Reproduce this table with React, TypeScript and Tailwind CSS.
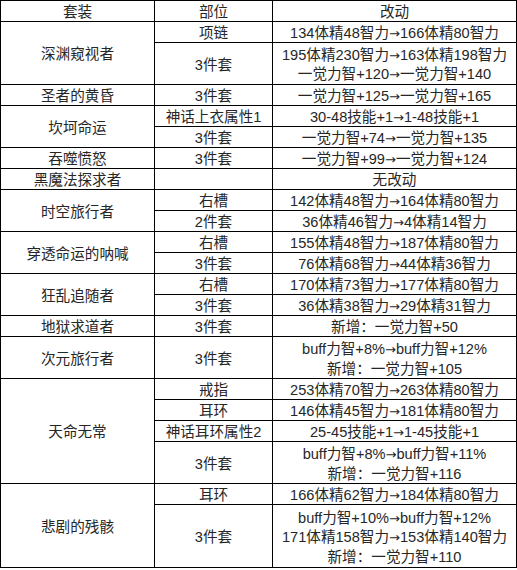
import React from "react";

interface Part {
  slot: string;
  changes: string[];
}

interface SetRow {
  name: string;
  parts: Part[];
}

const rows: SetRow[] = [
  {
    name: "深渊窥视者",
    parts: [
      { slot: "项链", changes: ["134体精48智力→166体精80智力"] },
      { slot: "3件套", changes: ["195体精230智力→163体精198智力", "一觉力智+120→一觉力智+140"] },
    ],
  },
  { name: "圣者的黄昏", parts: [{ slot: "3件套", changes: ["一觉力智+125→一觉力智+165"] }] },
  {
    name: "坎坷命运",
    parts: [
      { slot: "神话上衣属性1", changes: ["30-48技能+1→1-48技能+1"] },
      { slot: "3件套", changes: ["一觉力智+74→一觉力智+135"] },
    ],
  },
  { name: "吞噬愤怒", parts: [{ slot: "3件套", changes: ["一觉力智+99→一觉力智+124"] }] },
  { name: "黑魔法探求者", parts: [{ slot: "", changes: ["无改动"] }] },
  {
    name: "时空旅行者",
    parts: [
      { slot: "右槽", changes: ["142体精48智力→164体精80智力"] },
      { slot: "2件套", changes: ["36体精46智力→4体精14智力"] },
    ],
  },
  {
    name: "穿透命运的呐喊",
    parts: [
      { slot: "右槽", changes: ["155体精48智力→187体精80智力"] },
      { slot: "3件套", changes: ["76体精68智力→44体精36智力"] },
    ],
  },
  {
    name: "狂乱追随者",
    parts: [
      { slot: "右槽", changes: ["170体精73智力→177体精80智力"] },
      { slot: "3件套", changes: ["36体精38智力→29体精31智力"] },
    ],
  },
  { name: "地狱求道者", parts: [{ slot: "3件套", changes: ["新增：一觉力智+50"] }] },
  {
    name: "次元旅行者",
    parts: [{ slot: "3件套", changes: ["buff力智+8%→buff力智+12%", "新增：一觉力智+105"] }],
  },
  {
    name: "天命无常",
    parts: [
      { slot: "戒指", changes: ["253体精70智力→263体精80智力"] },
      { slot: "耳环", changes: ["146体精45智力→181体精80智力"] },
      { slot: "神话耳环属性2", changes: ["25-45技能+1→1-45技能+1"] },
      { slot: "3件套", changes: ["buff力智+8%→buff力智+11%", "新增：一觉力智+116"] },
    ],
  },
  {
    name: "悲剧的残骸",
    parts: [
      { slot: "耳环", changes: ["166体精62智力→184体精80智力"] },
      {
        slot: "3件套",
        changes: ["buff力智+10%→buff力智+12%", "171体精158智力→153体精140智力", "新增：一觉力智+110"],
      },
    ],
  },
];

const spanClass: Record<number, string> = {
  1: "row-span-1",
  2: "row-span-2",
  3: "row-span-3",
  4: "row-span-4",
  5: "row-span-5",
};

// every cell: centred text, right + bottom rule (the grid itself draws left + top)
const cell =
  "flex flex-col items-center justify-center text-center border-r border-b border-black whitespace-nowrap leading-[18.3px] pt-[3px]";

// the arrow in Liberation Sans is tiny, so it gets its own font
function Change({ text }: { text: string }) {
  const [from, to] = text.split("→");
  if (to === undefined) return <span>{text}</span>;
  return (
    <span>
      {from}
      <span className="font-['DejaVu_Sans'] text-[13px]">→</span>
      {to}
    </span>
  );
}

export default function App() {
  return (
    <div className="w-[517px] h-[570px] bg-white font-['Liberation_Sans','Noto_Sans_CJK_SC',sans-serif] text-[14.6px] text-[#262626]">
      <div className="grid grid-cols-[154px_118px_244px] auto-rows-[21px] border-l border-t border-black w-[517px]">
        <div className={`${cell} col-start-1`}>套装</div>
        <div className={`${cell} col-start-2`}>部位</div>
        <div className={`${cell} col-start-3`}>改动</div>
        {rows.map((row) => {
          const total = row.parts.reduce((n, p) => n + p.changes.length, 0);
          return (
            <React.Fragment key={row.name}>
              <div className={`${cell} col-start-1 ${spanClass[total]}`}>{row.name}</div>
              {row.parts.map((part, i) => (
                <React.Fragment key={i}>
                  <div className={`${cell} col-start-2 ${spanClass[part.changes.length]}`}>{part.slot}</div>
                  <div className={`${cell} col-start-3 ${spanClass[part.changes.length]}`}>
                    {part.changes.map((c) => (
                      <Change key={c} text={c} />
                    ))}
                  </div>
                </React.Fragment>
              ))}
            </React.Fragment>
          );
        })}
      </div>
    </div>
  );
}
